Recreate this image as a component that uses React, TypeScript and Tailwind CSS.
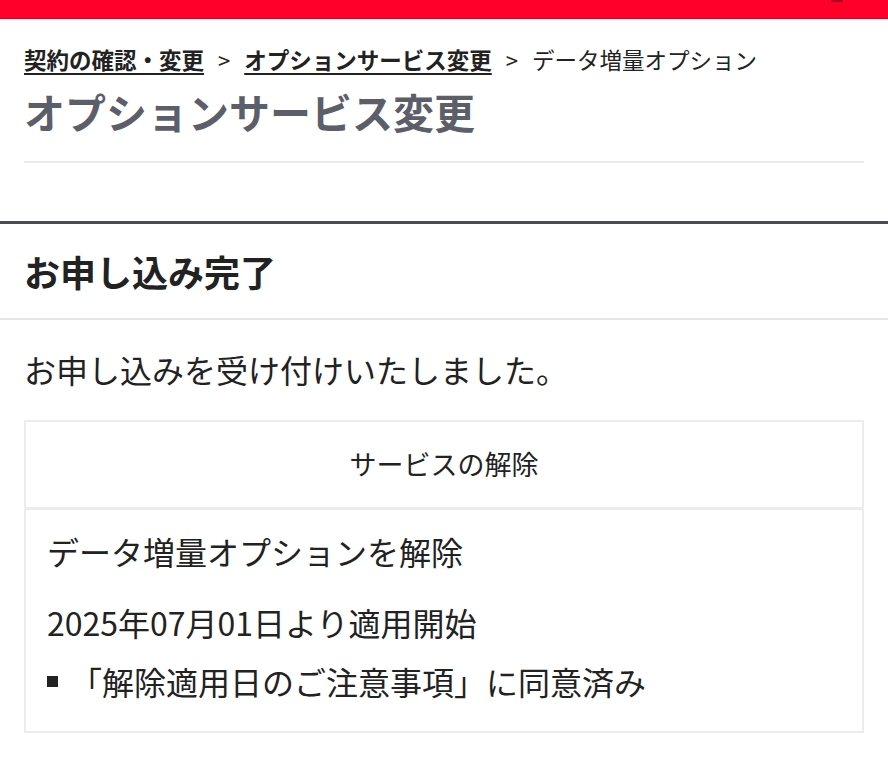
import React from "react";

export default function App() {
  const font = { fontFamily: '"Noto Sans CJK JP", "Noto Sans", sans-serif' };
  return (
    <div className="w-[888px] min-h-[760px] bg-white text-[#222]" style={font}>
      <div className="h-[19px] bg-[#ff0029] border-b border-[#d9001f] flex justify-end pr-[45px]">
        <div className="w-[12px] h-[2px] bg-[#b0001a]" />
      </div>
      <div className="px-[24px]">
        <div className="pt-[23px] flex items-center text-[22.5px] leading-[34px] text-[#222] whitespace-nowrap">
          <span className="font-bold underline underline-offset-[4px]">契約の確認・変更</span>
          <span className="mx-[14px] text-[22px]">&gt;</span>
          <span className="font-bold underline underline-offset-[4px]">オプションサービス変更</span>
          <span className="mx-[14px] text-[22px]">&gt;</span>
          <span>データ増量オプション</span>
        </div>
        <h1 className="mt-[9px] text-[41px] leading-[52px] font-bold text-[#5c5f69]">オプションサービス変更</h1>
        <div className="mt-[24px] h-[2px] bg-[#ebebeb]" />
      </div>
      <div className="mt-[58px] h-[3px] bg-[#4a4d55]" />
      <div className="h-[96px] flex items-center px-[24px] border-b-2 border-[#e6e6e6]">
        <h2 className="text-[36px] font-bold leading-[44px]">お申し込み完了</h2>
      </div>
      <div className="px-[24px]">
        <p className="mt-[28px] text-[32px] leading-[42px]">お申し込みを受け付けいたしました。</p>
        <div className="mt-[30px] border-2 border-[#ececec]">
          <div className="h-[88px] flex items-center justify-center text-[27px] border-b-[3px] border-[#ececec]">サービスの解除</div>
          <div className="px-[21px] pt-[19px] pb-[28px] text-[32px] leading-[44px]">
            <p>データ増量オプションを解除</p>
            <p className="mt-[27px]">2025年07月01日より適用開始</p>
            <div className="mt-[15px] flex items-center">
              <span className="w-[11px] h-[11px] bg-[#222] mr-[12px]" />
              <span>「解除適用日のご注意事項」に同意済み</span>
            </div>
          </div>
        </div>
      </div>
    </div>
  );
}
